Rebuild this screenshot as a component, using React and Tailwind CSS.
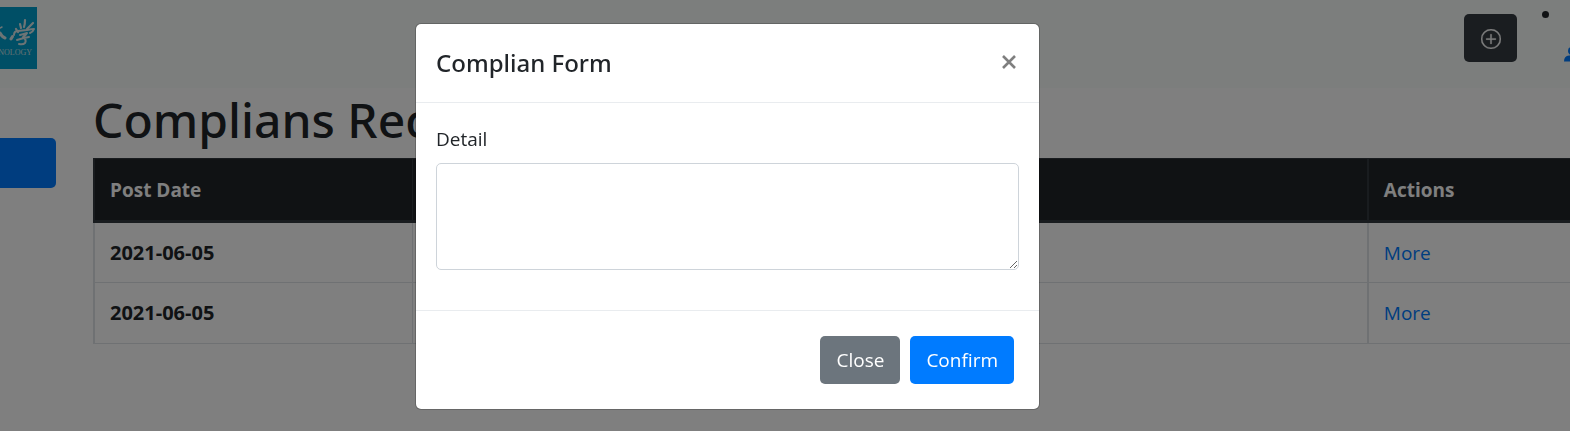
import React from "react";

const rows = [
  { id: 1, date: "2021-06-05" },
  { id: 2, date: "2021-06-05" },
];

function Logo() {
  return (
    <svg viewBox="0 0 37 62" className="h-[62px] w-[37px]" role="img" aria-label="University logo">
      <rect width="37" height="62" fill="#009fcc" />
      <g fill="none" stroke="#dbe8ea" strokeLinecap="round" strokeLinejoin="round">
        <path d="M0 21L2 20" strokeWidth="1.5" />
        <path d="M0 26Q2 30 5 31" strokeWidth="3" />
        <path d="M12.500 29.500L11 32" strokeWidth="3" />
        <path d="M16 22l2 3M20 17l1 4M25 13q0 4-1 7M33 16l-6 6" strokeWidth="2.200" />
        <path d="M14 28q0-4 4-4l9-1q5-1 7-1-1 3-4 4" strokeWidth="2" />
        <path d="M20 28q4-1 7-2-1 2-4 4M17 33q6-2 12-3M23 30q4 3 2 6-2 2-6 1" strokeWidth="2" />
      </g>
      <text x="32" y="48" textAnchor="end" fontFamily="Liberation Serif, serif" fontSize="8" fill="#c9e1e7">NOLOGY</text>
    </svg>
  );
}

function Header() {
  return (
    <header className="flex h-[88px] items-start justify-between bg-[#f8fcfa] pt-[7px]">
      <Logo />
      <div className="flex items-start pt-[7px]">
        <button type="button" aria-label="Add" className="flex h-12 w-[53px] items-center justify-center rounded-[5px] bg-[#343a40] text-white">
          <svg viewBox="0 0 16 16" className="mt-[2px] size-5" fill="currentColor" stroke="currentColor" strokeWidth="0.3">
            <path d="M8 15A7 7 0 1 1 8 1a7 7 0 0 1 0 14m0 1A8 8 0 1 0 8 0a8 8 0 0 0 0 16" />
            <path d="M8 4a.5.5 0 0 1 .5.5v3h3a.5.5 0 0 1 0 1h-3v3a.5.5 0 0 1-1 0v-3h-3a.5.5 0 0 1 0-1h3v-3A.5.5 0 0 1 8 4" />
          </svg>
        </button>
        <ul className="-mt-[3px] w-[53px] pl-[25px]">
          <li>
            <span className="block size-[7px] rounded-full bg-[#212529]" />
            <a href="#profile" aria-label="Profile" className="mt-7 ml-[22px] block w-[6px] overflow-hidden text-[#007bff]">
              <svg viewBox="0 0 20 16" className="h-4 w-5" fill="currentColor">
                <circle cx="8" cy="5" r="4" />
                <path d="M0 15.500Q0 10 5 9.500h6q5 .5 5 6z" />
              </svg>
            </a>
          </li>
        </ul>
      </div>
    </header>
  );
}

function RecordTable() {
  return (
    <table className="w-full table-fixed border-collapse text-left">
      <colgroup>
        <col className="w-[21.6%]" />
        <col />
        <col className="w-[13.7%]" />
      </colgroup>
      <thead className="bg-[#212529] text-white">
        <tr className="h-[63px]">
          <th scope="col" className="border border-b-[3px] border-l-2 border-[#32383e] px-[15px]">Post Date</th>
          <th scope="col" aria-label="Detail" className="border border-b-[3px] border-[#32383e] px-[15px]" />
          <th scope="col" className="border border-r-0 border-b-[3px] border-l-2 border-[#32383e] px-[15px]">Actions</th>
        </tr>
      </thead>
      <tbody>
        {rows.map((row) => (
          <tr key={row.id} className="h-[61px]">
            <th scope="row" className="border border-l-2 border-[#dee2e6] px-[15px] text-xl font-bold">{row.date}</th>
            <td className="border border-[#dee2e6]" />
            <td className="border border-r-0 border-l-2 border-[#dee2e6] px-[15px]">
              <a href="#more" className="text-[#007bff]">More</a>
            </td>
          </tr>
        ))}
      </tbody>
    </table>
  );
}

function ComplaintDialog() {
  return (
    <div className="fixed inset-0 flex items-start justify-center bg-black/50 pt-[23px] pr-[115px]">
      <form role="dialog" aria-modal="true" aria-labelledby="dialog-title" className="w-full max-w-[625px] rounded-[6px] border border-black/20 bg-white bg-clip-padding">
        <div className="flex items-start justify-between border-b border-[#e9ecef] p-5">
          <h5 id="dialog-title" className="font-['Noto_Sans','Open_Sans',sans-serif] text-2xl leading-[38px] font-medium">Complian Form</h5>
          <button type="button" aria-label="Close dialog" className="flex h-9 w-5 items-center justify-center text-[#7f7f7f]">
            <svg viewBox="0 0 14 14" className="size-[14px]" fill="none" stroke="currentColor" strokeWidth="2.6">
              <path d="M1 1l12 12M13 1L1 13" />
            </svg>
          </button>
        </div>
        <div className="px-5 pt-5 pb-10">
          <label htmlFor="detail" className="mb-2 block leading-8">Detail</label>
          <textarea id="detail" className="block h-[107px] w-full resize-y rounded-[5px] border border-[#ced4da] px-[15px] py-2" />
        </div>
        <div className="flex justify-end gap-[10px] border-t border-[#e9ecef] p-[25px]">
          <button type="button" className="h-12 rounded-[5px] bg-[#6c757d] px-4 text-white">Close</button>
          <button type="submit" className="h-12 rounded-[5px] bg-[#007bff] px-4 text-white">Confirm</button>
        </div>
      </form>
    </div>
  );
}

export default function App() {
  return (
    <div className="min-h-screen overflow-hidden bg-white font-['Open_Sans','Noto_Sans',sans-serif] text-[19px] leading-[30px] text-[#212529]">
      <Header />
      <div className="flex items-start">
        <aside className="w-14 shrink-0 pt-[50px]">
          <button type="button" aria-label="Menu" className="block h-[50px] w-full rounded-r-[5px] bg-[#007bff]" />
        </aside>
        <main className="min-w-0 flex-1 pl-[37px]">
          <h1 className="pt-[2px] pb-2 font-['Noto_Sans','Open_Sans',sans-serif] text-[48px] leading-[60px] font-medium">Complians Record</h1>
          <RecordTable />
        </main>
      </div>
      <ComplaintDialog />
    </div>
  );
}
